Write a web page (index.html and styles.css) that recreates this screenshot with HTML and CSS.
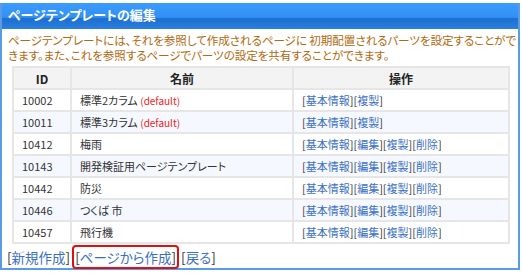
FILE: index.html
```html
<!DOCTYPE html>
<html lang="ja">
<head>
<meta charset="UTF-8">
<title>ページテンプレートの編集</title>
<link rel="stylesheet" href="styles.css">
</head>
<body>
<div class="panel">
	<div class="panel-title">ページテンプレートの編集</div>
	<p class="note">ページテンプレートには、それを参照して作成されるページに 初期配置されるパーツを設定することができます。また、これを参照するページでパーツの設定を共有することができます。</p>

	<table class="list">
		<tr>
			<th class="col-id">ID</th>
			<th class="col-name">名前</th>
			<th>操作</th>
		</tr>
		<tr>
			<td>10002</td>
			<td>標準2カラム <span class="def">(default)</span></td>
			<td>[<a href="#">基本情報</a>][<a href="#">複製</a>]</td>
		</tr>
		<tr class="alt">
			<td>10011</td>
			<td>標準3カラム <span class="def">(default)</span></td>
			<td>[<a href="#">基本情報</a>][<a href="#">複製</a>]</td>
		</tr>
		<tr>
			<td>10412</td>
			<td>梅雨</td>
			<td>[<a href="#">基本情報</a>][<a href="#">編集</a>][<a href="#">複製</a>][<a href="#">削除</a>]</td>
		</tr>
		<tr class="alt">
			<td>10143</td>
			<td>開発検証用ページテンプレート</td>
			<td>[<a href="#">基本情報</a>][<a href="#">編集</a>][<a href="#">複製</a>][<a href="#">削除</a>]</td>
		</tr>
		<tr>
			<td>10442</td>
			<td>防災</td>
			<td>[<a href="#">基本情報</a>][<a href="#">編集</a>][<a href="#">複製</a>][<a href="#">削除</a>]</td>
		</tr>
		<tr class="alt">
			<td>10446</td>
			<td>つくば 市</td>
			<td>[<a href="#">基本情報</a>][<a href="#">編集</a>][<a href="#">複製</a>][<a href="#">削除</a>]</td>
		</tr>
		<tr>
			<td>10457</td>
			<td>飛行機</td>
			<td>[<a href="#">基本情報</a>][<a href="#">編集</a>][<a href="#">複製</a>][<a href="#">削除</a>]</td>
		</tr>
	</table>

	<div class="actions">
		<span>[<a href="#">新規作成</a>]</span>
		<span class="marked">[<a href="#">ページから作成</a>]</span>
		<span>[<a href="#">戻る</a>]</span>
	</div>
</div>
</body>
</html>
```

FILE: styles.css
```css
body {
	margin: 0;
	padding-top: 3px;
	background: #fff;
	font-family: "Noto Sans CJK JP", "DejaVu Sans", sans-serif;
	font-feature-settings: "palt";
	color: #333;
}

.panel {
	width: 516px;
	height: 265px;
	border: 2px solid #5a9be6;
	border-top: none;
}

.panel-title {
	height: 26px;
	line-height: 24px;
	padding-left: 6px;
	font-size: 13px;
	font-weight: bold;
	color: #fff;
	background: linear-gradient(#3b9bff 0%, #3390f5 55%, #1c6fcf 60%, #2a7fe0 100%);
}

.note {
	margin: 4px 0 3px 6px;
	width: 508px;
	font-size: 11.6px;
	letter-spacing: -0.1px;
	line-height: 15px;
	color: #b06a10;
}

.list {
	margin-left: 10px;
	width: 498px;
	border-collapse: collapse;
	border: 2px solid #e3e3e3;
	font-size: 11px;
}

.list th,
.list td {
	border: 2px solid #e6e6e6;
	height: 18px;
	padding: 1px 8px;
	text-align: left;
}

.list th {
	background: #f3f3f3;
	text-align: center;
	font-size: 12px;
	color: #222;
}

.col-id {
	width: 40px;
}

.col-name {
	width: 204px;
}

.list tr.alt td {
	background: #f5f9ff;
}

.def {
	color: #ee2222;
	font-size: 10px;
}

a {
	color: #3a6fc4;
	text-decoration: none;
}

.actions {
	margin: 1px 0 0 5px;
	font-size: 13.5px;
	line-height: 20px;
	display: flex;
	gap: 2px;
	align-items: center;
}

.marked {
	border: 2px solid #e01010;
	border-radius: 4px;
	padding: 0 1px;
}
```
